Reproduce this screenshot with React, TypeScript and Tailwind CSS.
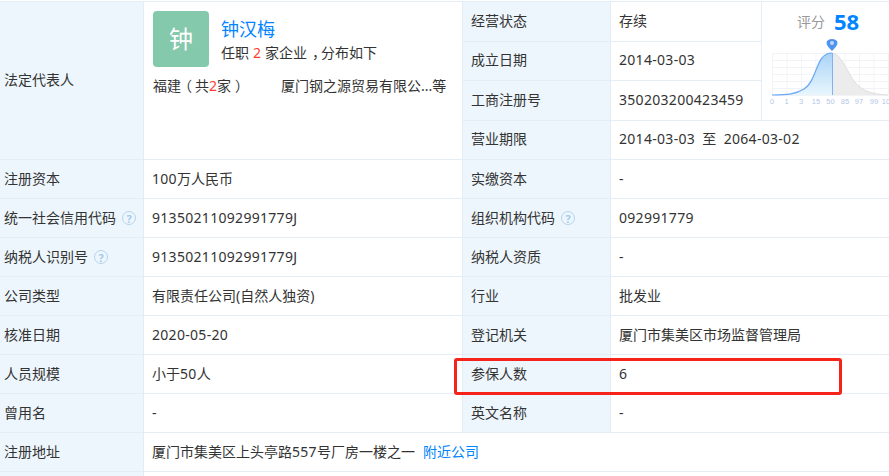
const LABEL = "bg-[#eef6fd] border border-[#e4edf5] pl-1 pr-1 pb-[2px] font-normal text-left";
const CELL = "border border-[#e4edf5] pl-2 pr-1 pb-[2px]";
const LABEL2 = "bg-[#eef6fd] border border-[#e4edf5] pl-2 pb-[2px] font-normal text-left";
// digits in the reference run a little wider than Noto Sans
const NUM = "tracking-[0.3px]";

function Help() {
  return (
    <span className="inline-flex items-center justify-center w-[14px] h-[14px] ml-[6px] rounded-full border-[1.5px] border-[#b4d4ec] text-[11px] font-bold leading-none text-[#a3cbe9]">
      ?
    </span>
  );
}

function Bell() {
  return (
    <svg width="122" height="68" viewBox="-4 0 122 68" className="block">
      <defs>
        <linearGradient id="fillBlue" x1="0" y1="0" x2="0" y2="1">
          <stop offset="0" stopColor="#a9d3f7" />
          <stop offset="1" stopColor="#e8f6fd" />
        </linearGradient>
      </defs>
      {[0, 14.5, 29, 43.5, 58, 72.5, 87, 101.5, 116].map((x) => (
        <line key={x} x1={x + 0.5} y1="14" x2={x + 0.5} y2="56" stroke="#f1f3f6" />
      ))}
      {[14, 21, 28, 35, 42, 49, 56].map((y) => (
        <line key={y} x1="0" y1={y + 0.5} x2="116" y2={y + 0.5} stroke="#f1f3f6" />
      ))}
      <path d="M60 14 C66 14 70 22 76 32 C84 48 92 55 116 56 L60 56 Z" fill="#ececec" />
      <path d="M60 14 C66 14 70 22 76 32 C84 48 92 55 116 56" fill="none" stroke="#dedede" />
      <path d="M0 56 C16 56 24 55 32 50 C42 44 44 26 50 19 C53 15 56 14 60 14 L60 56 Z" fill="url(#fillBlue)" />
      <path d="M0 56 C16 56 24 55 32 50 C42 44 44 26 50 19 C53 15 56 14 60 14" fill="none" stroke="#6aa9f4" strokeWidth="1.2" />
      <line x1="60.5" y1="14" x2="60.5" y2="56" stroke="#7db2f5" />
      <path d="M60 12 C56.5 8.5 54.5 6 54.5 4 A5.5 3.9 0 0 1 65.5 4 C65.5 6 63.5 8.5 60 12 Z" fill="#4e93ef" />
      <circle cx="60" cy="4" r="2" fill="#bcd9fb" />
      {[
        ["0", 0],
        ["1", 14.5],
        ["3", 29],
        ["15", 44],
        ["50", 58.5],
        ["85", 73],
        ["97", 87],
        ["99", 102],
        ["100", 116],
      ].map(([t, x]) => (
        <text key={t} x={x} y="65" fontSize="7.5" fill="#b3c8e6" textAnchor="middle" fontFamily="'Liberation Sans', sans-serif">
          {t}
        </text>
      ))}
    </svg>
  );
}

export default function App() {
  return (
    <div className="relative w-[889px] h-[476px] overflow-hidden bg-white text-[14px] text-[#333] font-['Noto_Sans','Noto_Sans_CJK_SC',sans-serif]">
      <table className="table-fixed border-collapse w-[900px] mt-[1px] -ml-[1px]">
        <colgroup>
          <col className="w-[144px]" />
          <col className="w-[319px]" />
          <col className="w-[148px]" />
          <col className="w-[151px]" />
          <col className="w-[138px]" />
        </colgroup>
        <tbody>
          <tr className="h-[39.5px]">
            <th rowSpan={4} className={LABEL}>法定代表人</th>
            <td rowSpan={4} className="border border-[#e4edf5] pl-[9px] pr-1 align-top pt-[9px]">
              <div className="flex">
                <div className="w-[56px] h-[56px] rounded-[4px] bg-[#85c9ac] text-white text-[24px] flex items-center justify-center">钟</div>
                <div className="ml-3 mt-[5px]">
                  <div className="text-[18px] leading-[26px] text-[#0084ff]">钟汉梅</div>
                  <div className="leading-[20px] mt-[1px]">
                    任职<span className="mx-[4px] text-[#ff3b30]">2</span>家企业<span className="inline-block translate-x-[5px]">，</span>分布如下
                  </div>
                </div>
              </div>
              <div className="flex mt-[9px] leading-[20px]">
                <span className="w-[128px]">
                  福建<span className="inline-block -translate-x-[3px]">（</span>共<span className="text-[#ff3b30]">2</span>家<span className="inline-block translate-x-[4px]">）</span>
                </span>
                <span>厦门钢之源贸易有限公...等</span>
              </div>
            </td>
            <th className={LABEL2}>经营状态</th>
            <td className={CELL}>存续</td>
            <td rowSpan={3} className="border border-[#e4edf5] align-top pl-[6px]">
              <div className="flex items-center pl-[29px] h-[35px] mt-[2px]">
                <span className="text-[#999]">评分</span>
                <span className="ml-[9px] text-[22px] font-bold text-[#0084ff]">58</span>
              </div>
              <Bell />
            </td>
          </tr>
          <tr className="h-[39.5px]">
            <th className={LABEL2}>成立日期</th>
            <td className={`${CELL} ${NUM}`}>2014-03-03</td>
          </tr>
          <tr className="h-[39.5px]">
            <th className={LABEL2}>工商注册号</th>
            <td className={`${CELL} ${NUM}`}>350203200423459</td>
          </tr>
          <tr className="h-[39.5px]">
            <th className={LABEL2}>营业期限</th>
            <td colSpan={2} className={CELL}>
              <span className={NUM}>2014-03-03</span> &nbsp;至&nbsp; <span className={NUM}>2064-03-02</span>
            </td>
          </tr>
          <tr className="h-[39px]">
            <th className={LABEL}>注册资本</th>
            <td className={CELL}><span className={NUM}>100</span>万人民币</td>
            <th className={LABEL2}>实缴资本</th>
            <td colSpan={2} className={CELL}>-</td>
          </tr>
          <tr className="h-[39px]">
            <th className={LABEL}>统一社会信用代码<Help /></th>
            <td className={`${CELL} ${NUM}`}>91350211092991779J</td>
            <th className={LABEL2}>组织机构代码<Help /></th>
            <td colSpan={2} className={`${CELL} ${NUM}`}>092991779</td>
          </tr>
          <tr className="h-[39px]">
            <th className={LABEL}>纳税人识别号<Help /></th>
            <td className={`${CELL} ${NUM}`}>91350211092991779J</td>
            <th className={LABEL2}>纳税人资质</th>
            <td colSpan={2} className={CELL}>-</td>
          </tr>
          <tr className="h-[39px]">
            <th className={LABEL}>公司类型</th>
            <td className={CELL}>有限责任公司(自然人独资)</td>
            <th className={LABEL2}>行业</th>
            <td colSpan={2} className={CELL}>批发业</td>
          </tr>
          <tr className="h-[39px]">
            <th className={LABEL}>核准日期</th>
            <td className={`${CELL} ${NUM}`}>2020-05-20</td>
            <th className={LABEL2}>登记机关</th>
            <td colSpan={2} className={CELL}>厦门市集美区市场监督管理局</td>
          </tr>
          <tr className="h-[39px]">
            <th className={LABEL}>人员规模</th>
            <td className={CELL}>小于<span className={NUM}>50</span>人</td>
            <th className={LABEL2}>参保人数</th>
            <td colSpan={2} className={CELL}>6</td>
          </tr>
          <tr className="h-[39px]">
            <th className={LABEL}>曾用名</th>
            <td className={CELL}>-</td>
            <th className={LABEL2}>英文名称</th>
            <td colSpan={2} className={CELL}>-</td>
          </tr>
          <tr className="h-[39px]">
            <th className={LABEL}>注册地址</th>
            <td colSpan={4} className={CELL}>
              厦门市集美区上头亭路<span className={NUM}>557</span>号厂房一楼之一
              <span className="ml-2 text-[#0084ff]">附近公司</span>
            </td>
          </tr>
          <tr className="h-[39px]">
            <th className={LABEL} />
            <td colSpan={4} className={CELL} />
          </tr>
        </tbody>
      </table>
      {/* red annotation box */}
      <div className="absolute left-[454px] top-[358px] w-[388px] h-[37px] border-[3px] border-[#f5231a] rounded-[3px]" />
    </div>
  );
}
